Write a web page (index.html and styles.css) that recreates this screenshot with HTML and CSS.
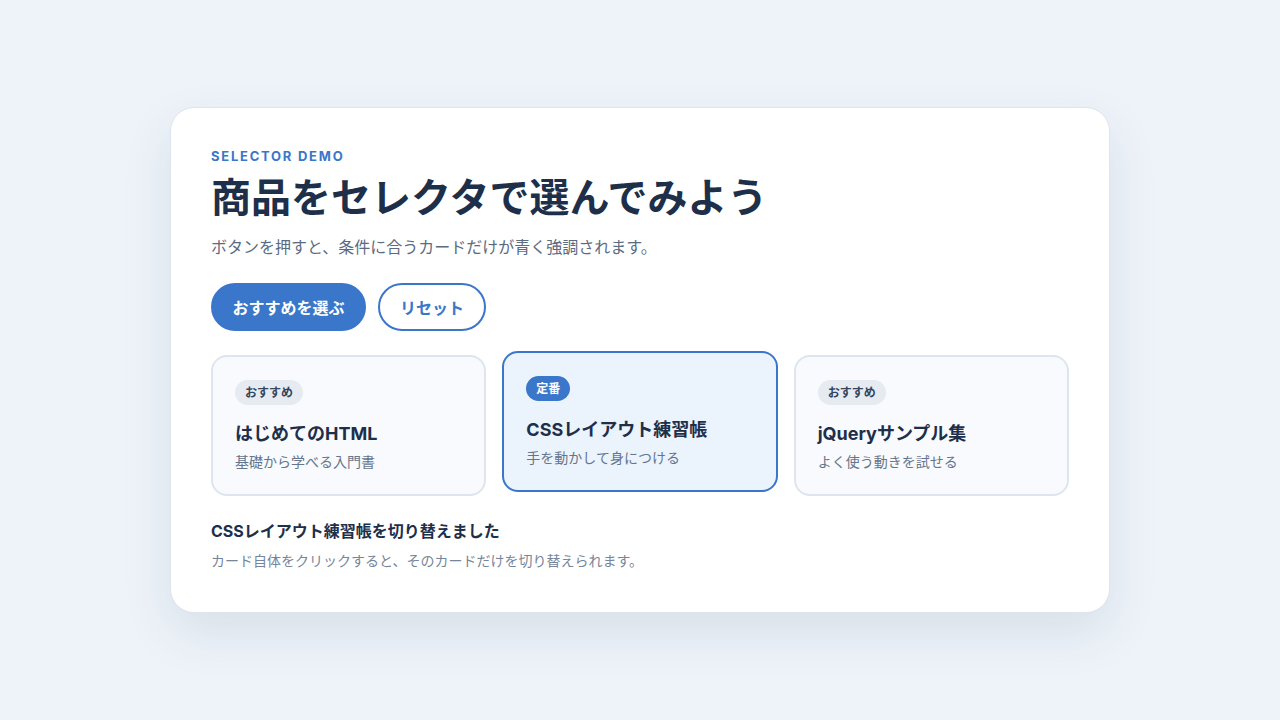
FILE: index.html
```html
<!DOCTYPE html>
<html lang="ja">
<head>
<meta charset="utf-8">
<title>Selector Demo</title>
<link rel="stylesheet" href="styles.css">
</head>
<body>
<main class="panel">
  <p class="eyebrow">SELECTOR DEMO</p>
  <h1 class="title">商品をセレクタで選んでみよう</h1>
  <p class="lead">ボタンを押すと、条件に合うカードだけが青く強調されます。</p>
  <div class="actions">
    <button class="btn btn-primary">おすすめを選ぶ</button>
    <button class="btn btn-outline">リセット</button>
  </div>
  <div class="cards">
    <div class="card">
      <span class="badge">おすすめ</span>
      <h2 class="card-title">はじめてのHTML</h2>
      <p class="card-desc">基礎から学べる入門書</p>
    </div>
    <div class="card is-active">
      <span class="badge">定番</span>
      <h2 class="card-title">CSSレイアウト練習帳</h2>
      <p class="card-desc">手を動かして身につける</p>
    </div>
    <div class="card">
      <span class="badge">おすすめ</span>
      <h2 class="card-title">jQueryサンプル集</h2>
      <p class="card-desc">よく使う動きを試せる</p>
    </div>
  </div>
  <p class="status">CSSレイアウト練習帳を切り替えました</p>
  <p class="hint">カード自体をクリックすると、そのカードだけを切り替えられます。</p>
</main>
</body>
</html>
```
FILE: styles.css
```css
* { box-sizing: border-box; }
html, body { margin: 0; padding: 0; }
body {
  background: #eef3f9;
  font-family: "Inter", "Noto Sans CJK JP", sans-serif;
  color: #1e2f4a;
  height: 720px;
  display: flex;
  align-items: center;
  justify-content: center;
}
.panel {
  width: 940px;
  background: #ffffff;
  border: 1px solid #dde5ef;
  border-radius: 24px;
  padding: 38px 40px 41px;
  box-shadow: 0 20px 50px rgba(30, 55, 90, 0.10);
}
.eyebrow {
  margin: 0;
  font-size: 13px;
  font-weight: 700;
  letter-spacing: 0.135em;
  color: #3a76c9;
  line-height: 20px;
}
.title {
  margin: 6px 0 0;
  font-size: 40px;
  font-weight: 700;
  line-height: 52px;
  color: #1e2f4a;
}
.lead {
  margin: 11px 0 0;
  font-size: 16px;
  line-height: 24px;
  color: #5b6b82;
}
.actions {
  display: flex;
  gap: 12px;
  margin-top: 24px;
}
.btn {
  font-family: inherit;
  font-size: 16px;
  font-weight: 700;
  height: 48px;
  border-radius: 999px;
  padding: 0 20px;
  cursor: pointer;
}
.btn-primary {
  background: #3a76c9;
  color: #ffffff;
  border: 2px solid #3a76c9;
  padding: 0 19.5px;
}
.btn-outline {
  background: #ffffff;
  color: #3a76c9;
  border: 2px solid #3a76c9;
}
.cards {
  display: grid;
  grid-template-columns: repeat(3, 1fr);
  gap: 16px;
  margin-top: 24px;
}
.card {
  background: #f8fafd;
  border: 2px solid #dde5ee;
  border-radius: 16px;
  padding: 23px 22px 22px;
  height: 141px;
}
.card.is-active {
  background: #ebf3fc;
  border-color: #3a76c9;
  transform: translateY(-4px);
}
.badge {
  display: inline-block;
  font-size: 12px;
  font-weight: 700;
  line-height: 25px;
  height: 25px;
  padding: 0 10px;
  border-radius: 999px;
  background: #e6ebf2;
  color: #33445c;
}
.is-active .badge {
  background: #3a76c9;
  color: #ffffff;
}
.card-title {
  margin: 15px 0 0;
  font-size: 18px;
  font-weight: 700;
  line-height: 28px;
  color: #1e2f4a;
}
.card-desc {
  margin: 4px 0 0;
  font-size: 14px;
  line-height: 20px;
  color: #66758b;
}
.status {
  margin: 23px 0 0;
  font-size: 16px;
  font-weight: 700;
  line-height: 24px;
  color: #1e2f4a;
}
.hint {
  margin: 8px 0 0;
  font-size: 14px;
  line-height: 20px;
  color: #77859a;
}
```
